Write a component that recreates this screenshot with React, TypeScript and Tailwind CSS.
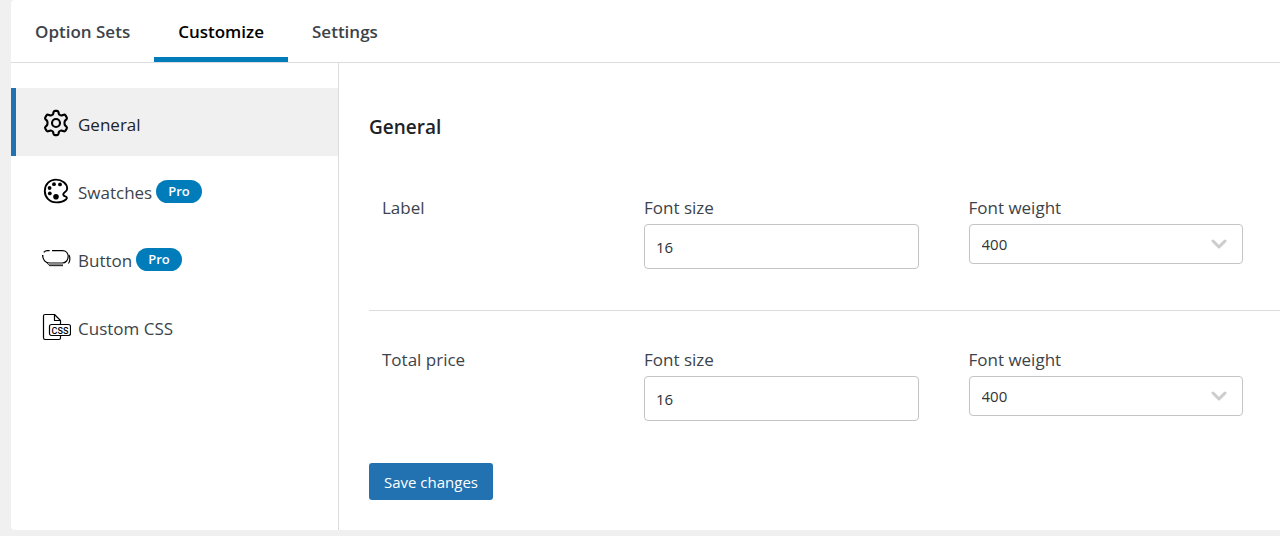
import React, { useState } from "react";
import { clsx } from "clsx";

const tabs = ["Option Sets", "Customize", "Settings"];

const sections = [
    { id: "general", label: "General", icon: GearIcon, pro: false },
    { id: "swatches", label: "Swatches", icon: PaletteIcon, pro: true },
    { id: "button", label: "Button", icon: ButtonIcon, pro: true },
    { id: "css", label: "Custom CSS", icon: CssIcon, pro: false },
];

const rows = [
    { id: "label", title: "Label" },
    { id: "total-price", title: "Total price" },
];

const weights = ["100", "200", "300", "400", "500", "600", "700", "800", "900"];

function GearIcon() {
    return (
        <svg viewBox="0 0 24 24" className="w-[30px] h-[30px]" fill="none" stroke="currentColor" strokeWidth="1.7" strokeLinecap="round" strokeLinejoin="round">
            <path d="M10.1 3.1Q10.4 2.3 11.2 2.3H12.8Q13.6 2.3 13.9 3.1L14.3 4.7Q14.5 5.3 15.3 5.7Q16 6.1 16.6 5.9L18.3 5.4Q19.1 5.2 19.6 5.9L20.6 7.6Q21 8.4 20.4 9L19.3 10.1Q18.8 10.6 18.8 12Q18.8 13.4 19.3 13.9L20.4 15Q21 15.6 20.6 16.4L19.6 18.1Q19.1 18.8 18.3 18.6L16.6 18.1Q16 17.9 15.3 18.3Q14.5 18.7 14.3 19.3L13.9 20.9Q13.6 21.7 12.8 21.7H11.2Q10.4 21.7 10.1 20.9L9.7 19.3Q9.5 18.7 8.7 18.3Q8 17.9 7.4 18.1L5.7 18.6Q4.9 18.8 4.4 18.1L3.4 16.4Q3 15.6 3.6 15L4.7 13.9Q5.2 13.4 5.2 12Q5.2 10.6 4.7 10.1L3.6 9Q3 8.4 3.4 7.6L4.4 5.9Q4.9 5.2 5.7 5.4L7.4 5.9Q8 6.1 8.7 5.7Q9.5 5.3 9.7 4.7Z" />
            <circle cx="12" cy="12" r="3.2" />
        </svg>
    );
}

function PaletteIcon() {
    return (
        <svg viewBox="0 0 30 30" className="w-[30px] h-[30px]" fill="none" stroke="currentColor" strokeWidth="1.9" strokeLinejoin="round">
            <path d="M15 3.6C8.4 3.6 3.8 8.6 3.8 15S8.7 26.4 15.3 26.4C19.5 26.4 23 25.3 25.2 23.2C26.5 21.9 25.9 20.9 24.3 20.4C22 19.6 21.6 17.9 23.2 16.7C24.9 15.5 26.2 14.6 26.2 12.7C26.2 7.4 21 3.6 15 3.6Z" />
            <g fill="currentColor" stroke="none">
                <circle cx="8.8" cy="17.4" r="1.9" />
                <circle cx="8.6" cy="12" r="1.9" />
                <circle cx="13" cy="8.2" r="1.9" />
                <circle cx="19" cy="8.4" r="1.9" />
                <circle cx="15" cy="20.8" r="2.8" />
            </g>
        </svg>
    );
}

function ButtonIcon() {
    return (
        <svg viewBox="0 0 30 30" className="w-[30px] h-[30px]" fill="none" stroke="currentColor" strokeWidth="1.2">
            <path d="M1.6 11V12.2M2.8 8.4C3.6 7.4 4.8 6.7 6.6 6.7H8.6" />
            <path d="M11 6.7H21.5C25 6.7 27.2 9.4 27.2 12.6S24.8 19 21.5 19H8.5C4.5 19 1.6 15.8 1.6 11" />
            <path d="M28 11C29.4 13.500 29 17.500 27.400 19.500" />
            <rect x="8" y="19" width="14" height="3" fill="#888888" stroke="none" />
            <path d="M5.500 18.500L8.500 21.700H22" strokeWidth="0.800" />
        </svg>
    );
}

function CssIcon() {
    return (
        <svg viewBox="0 0 30 30" className="w-[30px] h-[30px]" fill="none" stroke="currentColor" strokeWidth="1.2" strokeLinejoin="round">
            <path d="M19.5 12.5V8.500L13.500 2.500H4Q2.500 2.500 2.500 4V25.500Q2.500 27.500 4 27.500H18Q19.500 27.500 19.500 26V24" />
            <path d="M13.5 2.5V8.5H19.500" />
            <rect x="8.500" y="12.500" width="21" height="11" rx="2" />
            <text x="19" y="21.500" textAnchor="middle" fill="currentColor" stroke="none" fontSize="9" fontWeight="500" fontFamily="Roboto, sans-serif">CSS</text>
        </svg>
    );
}

function ChevronDown() {
    return (
        <svg viewBox="0 0 16 10" className="pointer-events-none absolute right-4 top-1/2 -translate-y-1/2 w-4 h-[10px]" fill="none" stroke="#cccccc" strokeWidth="3" strokeLinecap="round" strokeLinejoin="round">
            <path d="M2 2L8 8L14 2" />
        </svg>
    );
}

function TypographyRow({ id, title }: { id: string; title: string }) {
    const [size, setSize] = useState("16");
    const [weight, setWeight] = useState("400");

    return (
        <div
            role="group"
            aria-labelledby={`${id}-title`}
            className="grid grid-cols-[212px_1fr_1fr] gap-[50px] pl-[13px] pr-[37px] pt-[37px] pb-[41px]"
        >
            <h3 id={`${id}-title`}>{title}</h3>
            <div>
                <label htmlFor={`${id}-size`} className="block mb-1">Font size</label>
                <input
                    id={`${id}-size`}
                    type="text"
                    inputMode="numeric"
                    value={size}
                    onChange={(e) => setSize(e.target.value)}
                    className="block w-full h-[45px] px-[11px] border border-[#c4c4c4] rounded text-[15px] text-[#2c3338] outline-none focus:border-[#2271b1]"
                />
            </div>
            <div>
                <label htmlFor={`${id}-weight`} className="block mb-1">Font weight</label>
                <div className="relative">
                    <select
                        id={`${id}-weight`}
                        value={weight}
                        onChange={(e) => setWeight(e.target.value)}
                        className="block appearance-none w-full h-10 pl-3 pr-10 border border-[#c4c4c4] rounded bg-white text-[15px] text-[#333333] outline-none focus:border-[#2271b1]"
                    >
                        {weights.map((w) => (
                            <option key={w} value={w}>{w}</option>
                        ))}
                    </select>
                    <ChevronDown />
                </div>
            </div>
        </div>
    );
}

export default function App() {
    const [activeTab, setActiveTab] = useState("Customize");
    const [section, setSection] = useState("general");

    return (
        <div className="min-h-screen pl-[11px] pb-[6px] bg-[#f0f0f0] font-['Open_Sans','Segoe_UI',sans-serif] text-[17px] leading-6 text-[#3c434a]">
            <div className="bg-white rounded-l">
                {/* Top tabs */}
                <nav className="flex border-b border-[#dcdcde]">
                    {tabs.map((tab) => (
                        <button
                            key={tab}
                            onClick={() => setActiveTab(tab)}
                            className={clsx(
                                "h-[62px] px-6 pt-[7px] border-b-[5px] font-semibold",
                                activeTab === tab ? "border-[#007cba] text-black" : "border-transparent"
                            )}
                        >
                            {tab}
                        </button>
                    ))}
                </nav>

                <div className="flex">
                    {/* Section menu */}
                    <aside className="w-[328px] shrink-0 pt-[25px] border-r border-[#dcdcde]">
                        {sections.map(({ id, label, icon: Icon, pro }) => (
                            <button
                                key={id}
                                onClick={() => setSection(id)}
                                className={clsx(
                                    "w-full h-[68px] pl-[25px] pt-[2px] border-l-[5px] flex items-center text-left",
                                    section === id ? "border-[#2271b1] bg-[#f0f0f0] text-[#1d2327]" : "border-transparent"
                                )}
                            >
                                <span className="text-black"><Icon /></span>
                                <span className="ml-[7px] pt-1">{label}</span>
                                {pro && (
                                    <span className="ml-1 px-3 h-[23px] flex items-center rounded-full bg-[#007cba] text-white text-[13px] font-semibold">
                                        Pro
                                    </span>
                                )}
                            </button>
                        ))}
                    </aside>

                    {/* Settings form */}
                    <form onSubmit={(e) => e.preventDefault()} className="flex-1 min-w-0 pl-[30px] pb-[30px]">
                        <h2 className="pt-[50px] pb-[18px] text-[19px] leading-7 font-semibold text-[#1d2327]">General</h2>
                        <div className="divide-y divide-[#dcdcde]">
                            {rows.map((row) => (
                                <TypographyRow key={row.id} {...row} />
                            ))}
                        </div>
                        <button type="submit" className="mt-px h-[37px] px-[15px] rounded-[3px] bg-[#2271b1] text-white text-[15px]">
                            Save changes
                        </button>
                    </form>
                </div>
            </div>
        </div>
    );
}
